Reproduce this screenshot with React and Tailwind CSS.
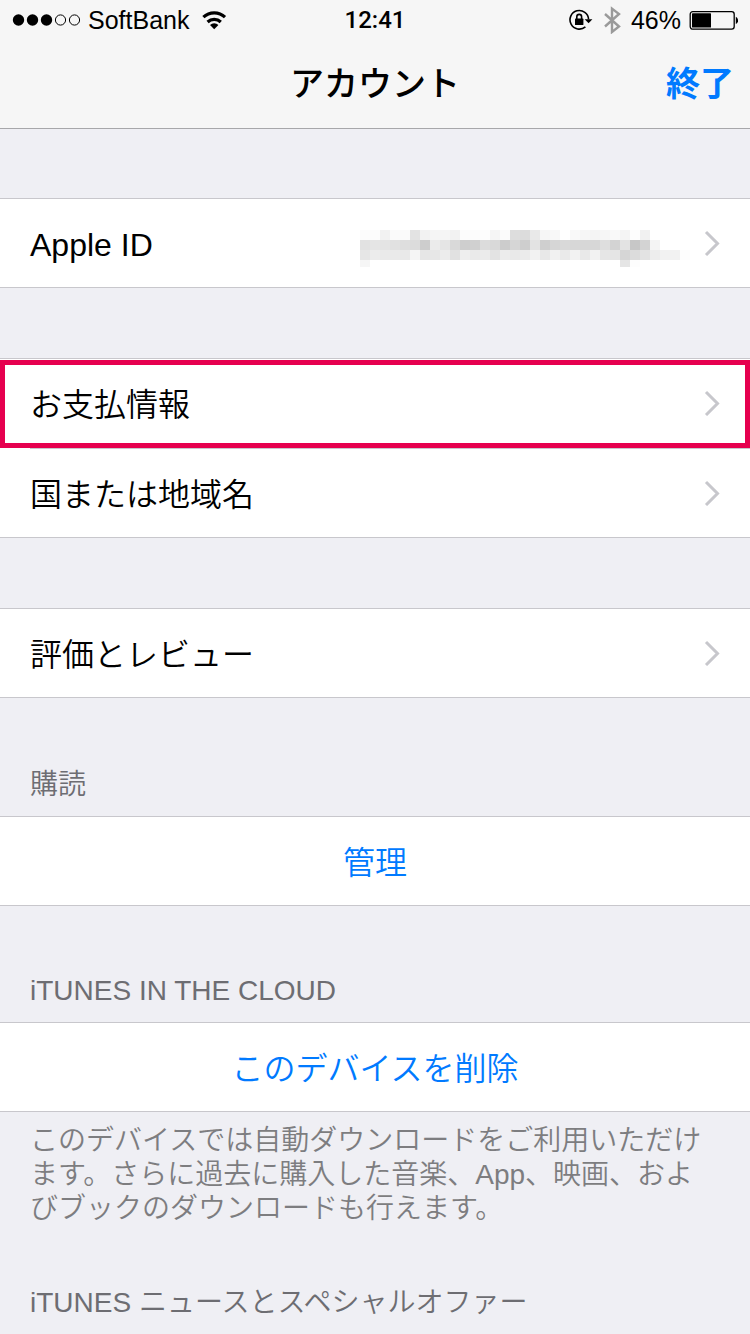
import React from 'react';

// Shades of the masked address, one string per row of cells
const MASK_ROWS = [
  'fc fc f2 fa fa e3 f2 f5 f5 f2 fc fc fd f5 fb dd dc e9 f6 f8 ff f9 f6 f4 f6 f9 f4 fd f1',
  'e2 e5 e4 e1 de dc cd eb e5 d9 ce d0 dc d9 cc d6 ce e3 cf d6 d9 d7 d7 d7 de d3 e3 c7 d3 f4',
  'e6 ec ea ea e9 f5 e6 e7 ec e1 ee ea eb e3 ec e9 eb f2 e8 f1 ea f2 e9 f2 e6 e5 d6 dc e3 ed f2 f2 fd',
  'f6 ff ff ff ff ff ff ff ff ff ff ff ff ff ff ff ff ff ff ff ff ff ff ff ff ff e5 fd',
];

const MaskedAddress = () => (
  <svg width="330" height="47" viewBox="0 -10 330 47" shapeRendering="crispEdges" aria-hidden="true">
    {MASK_ROWS.map((row, y) =>
      row.split(' ').map((shade, x) => (
        <rect key={`${x}-${y}`} x={x * 10} y={y * 10} width="10" height={y === 3 ? 7 : 10} fill={`#${shade}${shade}${shade}`} />
      ))
    )}
  </svg>
);

const Chevron = () => (
  <svg className="shrink-0" width="16" height="26" viewBox="0 0 16 26" fill="none" stroke="#c7c7cc" strokeWidth="3" aria-hidden="true">
    <path d="M2 2l11.5 11.5L2 25" />
  </svg>
);

const StatusBar = () => (
  <div className="grid grid-cols-3 items-center h-10 px-3 text-2xl leading-10">
    <div className="flex items-center">
      <svg width="70" height="12" viewBox="0 0 70 12" aria-hidden="true">
        <circle cx="6.5" cy="6" r="5.7" />
        <circle cx="20.5" cy="6" r="5.7" />
        <circle cx="34.5" cy="6" r="5.7" />
        <circle cx="48.5" cy="6" r="5.1" fill="none" stroke="#000" />
        <circle cx="62.5" cy="6" r="5.1" fill="none" stroke="#000" />
      </svg>
      <span className="ml-1.5 text-[25px]">SoftBank</span>
      <svg className="ml-3" width="26" height="20" viewBox="0 0 26 20" fill="none" stroke="#000" strokeWidth="3.2" aria-hidden="true">
        <path d="M2.4 7.2a15.6 15.6 0 0 1 21.6 0" />
        <path d="M6.6 12a9.6 9.6 0 0 1 13.2 0" />
        <path d="M13.2 19.2l-4.2-4.3a6.2 6.2 0 0 1 8.4 0z" fill="#000" stroke="none" />
      </svg>
    </div>
    <span className="text-center font-medium font-['Roboto',sans-serif]">12:41</span>
    <div className="flex items-center justify-end">
      <svg width="24" height="22" viewBox="0 0 24 22" fill="none" stroke="#000" strokeWidth="1.6" aria-hidden="true">
        <path d="M16.4 17.8a9.3 9.3 0 1 1 3.2-7.4" />
        <path d="M15.6 10.2h7.8L19.6 14.2z" fill="#000" stroke="none" />
        <rect x="6" y="9.6" width="8.4" height="6.4" rx="0.6" fill="#000" stroke="none" />
        <path d="M7.8 10V7.8a2.4 2.4 0 0 1 4.8 0V10" />
      </svg>
      <svg className="ml-2.5" width="18" height="28" viewBox="0 0 18 28" fill="none" stroke="#9a9a9a" strokeWidth="2.4" aria-hidden="true">
        <path d="M2 8l14 12.5-7 5.5V2.6l7 5.4L2 20.5" />
      </svg>
      <span className="ml-2.5 text-[25px]">46%</span>
      <svg className="ml-2" width="49" height="20" viewBox="0 0 49 20" aria-hidden="true">
        <rect x="1.2" y="1.6" width="44" height="17.6" rx="2.6" fill="none" stroke="#000" strokeWidth="1.3" />
        <rect x="3" y="3.2" width="19" height="14.4" rx="0.6" />
        <path d="M46.8 6.8a4 4 0 0 1 0 7.2z" />
      </svg>
    </div>
  </div>
);

const NavBar = () => (
  <div className="grid grid-cols-3 items-center h-[88px] px-4 text-[34px]">
    <h1 className="col-start-2 text-center font-medium">アカウント</h1>
    <button type="button" className="justify-self-end font-bold text-[#007aff]">終了</button>
  </div>
);

const Group = ({ className = '', children }) => (
  <section className={`bg-white border-y border-[#c8c7cc] ${className}`}>{children}</section>
);

const Row = ({ label, value, highlighted }) => (
  <button type="button" className="relative flex items-center justify-between w-full h-[88px] px-[30px] text-[32px] text-left">
    <span className="pt-1">{label}</span>
    <span className="flex items-center gap-3.5">
      {value}
      <Chevron />
    </span>
    {highlighted && <span className="absolute inset-x-0 top-px -bottom-px border-5 border-[#e6004f]" />}
  </button>
);

const ActionRow = ({ label }) => (
  <button type="button" className="w-full h-[88px] pt-1 text-[32px] text-center text-[#007aff]">{label}</button>
);

const GroupHeading = ({ className = '', children }) => (
  <h2 className={`px-[30px] text-[28px] leading-10 text-[#6d6d72] ${className}`}>{children}</h2>
);

const App = () => {
  return (
    <div className="min-h-screen bg-[#efeff4] text-black font-[350] font-['Liberation_Sans','Noto_Sans_CJK_JP',sans-serif]" lang="ja">
      <header className="bg-[#f6f6f6] border-b border-[#a7a7aa]">
        <StatusBar />
        <NavBar />
      </header>

      <main className="pb-2">
        <Group className="mt-[69px]">
          <Row label="Apple ID" value={<MaskedAddress />} />
        </Group>

        <Group className="mt-[70px]">
          <Row label="お支払情報" highlighted />
          <div className="ml-[30px] mt-px border-t border-[#c8c7cc]" />
          <Row label="国または地域名" />
        </Group>

        <Group className="mt-[70px]">
          <Row label="評価とレビュー" />
        </Group>

        <GroupHeading className="pt-[67px] pb-[11px]">購読</GroupHeading>
        <Group>
          <ActionRow label="管理" />
        </Group>

        <GroupHeading className="pt-[65px] pb-[11px]">iTUNES IN THE CLOUD</GroupHeading>
        <Group>
          <ActionRow label="このデバイスを削除" />
        </Group>
        <p className="px-[30px] pt-3 text-[28px] leading-[34px] text-[#7d7d80]">
          このデバイスでは自動ダウンロードをご利用いただけます。さらに過去に購入した音楽、App、映画、およびブックのダウンロードも行えます。
        </p>

        <GroupHeading className="pt-[57px]">iTUNES ニュースとスペシャルオファー</GroupHeading>
      </main>
    </div>
  );
};

export default App;
